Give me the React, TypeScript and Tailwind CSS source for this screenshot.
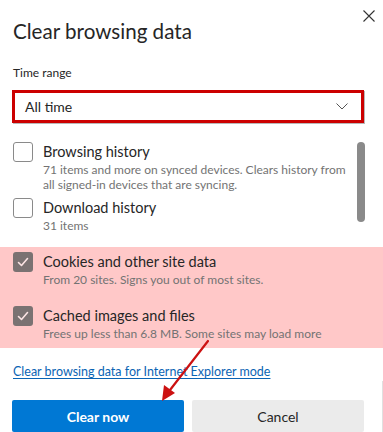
import React from "react";

const font = { fontFamily: 'Lato, "Noto Sans", Arial, sans-serif' };

function Box({ checked }: { checked?: boolean }) {
  if (checked) {
    return (
      <div className="w-[20px] h-[20px] rounded-[3px] bg-[#7a7272] flex items-center justify-center shrink-0">
        <svg width="14" height="14" viewBox="0 0 14 14">
          <path d="M2.5 7.5 L5.5 10.5 L11.5 3.5" fill="none" stroke="#fbe4e4" strokeWidth="1.6" strokeLinecap="round" strokeLinejoin="round" />
        </svg>
      </div>
    );
  }
  return <div className="w-[20px] h-[20px] rounded-[3px] border border-[#8a8a8a] bg-white shrink-0" />;
}

function Item({ checked, title, desc }: { checked?: boolean; title: string; desc: React.ReactNode }) {
  return (
    <div className="flex gap-[10px] items-start">
      <Box checked={checked} />
      <div className="flex flex-col">
        <div className="text-[14.5px] leading-[20px] text-[#262626] whitespace-nowrap">{title}</div>
        <div className="text-[12px] leading-[15px] text-[#737373] whitespace-nowrap">{desc}</div>
      </div>
    </div>
  );
}

export default function App() {
  return (
    <div className="w-[383px] h-[432px] bg-white relative overflow-hidden" style={font}>
      <div className="flex justify-between items-start pl-[13px] pr-[8px] pt-[10px]">
        <div className="text-[20.6px] leading-[28px] text-[#262626] mt-[7px]">Clear browsing data</div>
        <svg width="12" height="12" viewBox="0 0 12 12">
          <path d="M0.5 0.5 L11.5 11.5 M11.5 0.5 L0.5 11.5" stroke="#333" strokeWidth="1.1" />
        </svg>
      </div>

      <div className="pl-[13px] mt-[20px] text-[12px] leading-[16px] text-[#262626]">Time range</div>

      <div className="ml-[12px] mt-[9px] w-[352px] h-[33px] border-[3px] border-[#cc0000] flex items-center justify-between pl-[10px] pr-[13px] shadow-[1px_1px_0_#b8b8b8]">
        <span className="text-[14px] text-[#262626]">All time</span>
        <svg width="12" height="7" viewBox="0 0 12 7">
          <path d="M0.5 0.5 L6 6 L11.5 0.5" fill="none" stroke="#555" strokeWidth="1" />
        </svg>
      </div>

      <div className="flex mt-[19px] pl-[13px] pr-[18px]">
        <div className="flex flex-col gap-[6px] flex-1">
          <Item
            title="Browsing history"
            desc={<>71 items and more on synced devices. Clears history from<br />all signed-in devices that are syncing.</>}
          />
          <Item title="Download history" desc="31 items" />
        </div>
        <div className="w-[8px] h-[80px] rounded-full bg-[#8a8a8a]" />
      </div>

      <div className="mt-[14px] bg-[#ffc8c8] pl-[13px] pt-[5px] pb-[7px] flex flex-col gap-[19px]">
        <Item checked title="Cookies and other site data" desc="From 20 sites. Signs you out of most sites." />
        <Item checked title="Cached images and files" desc="Frees up less than 6.8 MB. Some sites may load more" />
      </div>

      <div className="pl-[13px] mt-[13px] leading-[18px]">
        <span className="text-[12.5px] leading-[18px] text-[#0a64b4] underline underline-offset-2">Clear browsing data for Internet Explorer mode</span>
      </div>

      <div className="flex gap-[8px] pl-[12px] mt-[19px]">
        <button className="w-[172px] h-[32px] rounded-[2px] bg-[#0078d4] text-white text-[14px] font-bold">Clear now</button>
        <button className="w-[172px] h-[32px] rounded-[2px] bg-[#ebebeb] text-[#262626] text-[14px]">Cancel</button>
      </div>

      <div className="absolute right-[0px] top-[381px] w-[1px] h-[51px] bg-[#e0e0e0]" />

      <svg className="absolute left-0 top-0 pointer-events-none" width="383" height="432" viewBox="0 0 383 432">
        <line x1="208" y1="341" x2="170" y2="390" stroke="#cc1111" strokeWidth="2.2" strokeLinecap="round" />
        <polygon points="162,401 164,385 175,393" fill="#cc1111" />
      </svg>
    </div>
  );
}
